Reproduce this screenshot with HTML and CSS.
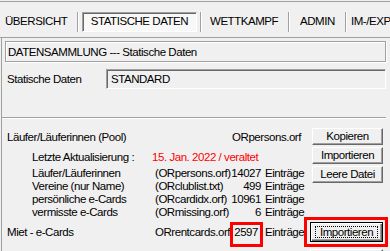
FILE: index.html
```html
<!DOCTYPE html>
<html>
<head>
<meta charset="utf-8">
<link rel="stylesheet" href="styles.css">
</head>
<body>
<div class="tabs">
  <div class="tab t1">ÜBERSICHT</div>
  <div class="sep"></div>
  <div class="tab t2 active">STATISCHE DATEN</div>
  <div class="sep"></div>
  <div class="tab t3">WETTKAMPF</div>
  <div class="sep"></div>
  <div class="tab t4">ADMIN</div>
  <div class="sep"></div>
  <div class="tab t5">IM-/EXPORT</div>
</div>
<div class="panel">
  <div class="titlebox">DATENSAMMLUNG --- Statische Daten</div>
  <div class="strow">
    <span class="stlabel">Statische Daten</span>
    <div class="input">STANDARD</div>
  </div>
  <div class="hr"></div>
  <div class="pool">
    <div class="info">
      <div class="r1"><span>Läufer/Läuferinnen (Pool)</span><span>ORpersons.orf</span></div>
      <div class="row r2"><span class="lbl">Letzte Aktualisierung :</span><span class="date">15. Jan. 2022 / veraltet</span></div>
      <div class="row r3"><span class="lbl">Läufer/Läuferinnen</span><span class="file">(ORpersons.orf)</span><span class="num">14027</span><span class="unit">Einträge</span></div>
      <div class="row"><span class="lbl">Vereine (nur Name)</span><span class="file">(ORclublist.txt)</span><span class="num">499</span><span class="unit">Einträge</span></div>
      <div class="row"><span class="lbl">persönliche e-Cards</span><span class="file">(ORcardidx.orf)</span><span class="num">10961</span><span class="unit">Einträge</span></div>
      <div class="row"><span class="lbl">vermisste e-Cards</span><span class="file">(ORmissing.orf)</span><span class="num">6</span><span class="unit">Einträge</span></div>
    </div>
    <div class="btns">
      <div class="btn">Kopieren</div>
      <div class="btn">Importieren</div>
      <div class="btn">Leere Datei</div>
    </div>
  </div>
  <div class="miet">
    <span class="mlabel">Miet - e-Cards</span>
    <span class="mfile">ORrentcards.orf</span>
    <span class="mnum">2597</span>
    <span class="munit">Einträge</span>
    <div class="mred"><div class="defbtn"><span class="focus">Importieren</span></div></div>
  </div>
  <div class="btn ghost"></div>
</div>
</body>
</html>
```
FILE: styles.css
```css
html, body {
  margin: 0;
  padding: 0;
  overflow: hidden;
}
body {
  background: #f0f0f0;
  font-family: "Liberation Sans", Arial, sans-serif;
  font-size: 11.5px;
  letter-spacing: -0.45px;
  color: #000;
  width: 390px;
  height: 251px;
  padding-top: 1px;
  box-sizing: border-box;
}
.tabs {
  display: flex;
  align-items: flex-start;
  height: 37px;
  box-sizing: border-box;
  border-top: 1px solid #a0a0a0;
  border-bottom: 1px solid #a0a0a0;
  padding-top: 10px;
  overflow: hidden;
}
.tab {
  height: 20px;
  line-height: 18px;
  white-space: nowrap;
  box-sizing: border-box;
  flex: none;
}
.sep {
  flex: none;
  width: 1px;
  height: 20px;
  background: #a0a0a0;
  border-right: 1px solid #fff;
}
.t1 { width: 77px; padding-left: 5px; }
.t2 {
  width: 115px;
  margin: 0 3px;
  text-align: center;
}
.active {
  border: 1px solid;
  border-color: #a0a0a0 #fff #fff #a0a0a0;
  box-shadow: inset 1px 1px #696969;
  background: #f8f8f8;
  line-height: 17px;
}
.t3 { width: 86px; padding-left: 8px; }
.t4 { width: 55px; padding-left: 10px; }
.t5 { padding-left: 4px; }

.panel {
  margin-left: 1px;
  border-left: 1px solid #a0a0a0;
  height: 213px;
  overflow: hidden;
}
.titlebox {
  margin: 3px 0 0 3px;
  width: 381px;
  height: 21px;
  box-sizing: border-box;
  border: 1px solid #a0a0a0;
  box-shadow: inset 1px 1px #fff, 1px 1px #fff;
  padding: 2px 0 0 2px;
  line-height: 17px;
  white-space: nowrap;
}
.strow {
  display: flex;
  margin-top: 7px;
  height: 20px;
}
.stlabel {
  width: 104px;
  padding-left: 5px;
  box-sizing: border-box;
  line-height: 20px;
}
.input {
  width: 280px;
  height: 20px;
  box-sizing: border-box;
  border: 1px solid;
  border-color: #a0a0a0 #fff #fff #a0a0a0;
  box-shadow: inset 1px 1px #696969;
  padding-left: 4px;
  line-height: 18px;
}
.hr {
  margin-top: 28px;
  width: 384px;
  height: 1px;
  background: #a0a0a0;
  border-bottom: 1px solid #fff;
}
.pool {
  display: flex;
}
.info {
  width: 310px;
  flex: none;
}
.r1 {
  display: flex;
  justify-content: space-between;
  width: 294px;
  margin-top: 11px;
  padding-left: 5px;
  line-height: 14px;
}
.row {
  display: flex;
  padding-left: 30px;
  line-height: 13px;
  white-space: nowrap;
}
.r2 { margin-top: 6px; line-height: 14px; }
.r3 { margin-top: 2px; line-height: 14px; }
.lbl { width: 123px; flex: none; }
.file { width: 75px; flex: none; }
.num { width: 31px; flex: none; text-align: right; }
.unit { margin-left: 4px; }
.date { margin-left: -3px; color: #f00; }

.btns {
  display: flex;
  flex-direction: column;
  gap: 2px;
  padding-top: 9px;
  width: 71px;
}
.btn {
  height: 17px;
  box-sizing: border-box;
  background: #f0f0f0;
  border: 1px solid;
  border-color: #fff #696969 #696969 #fff;
  box-shadow: inset -1px -1px #a0a0a0;
  text-align: center;
  line-height: 14px;
  white-space: nowrap;
}

.miet {
  display: flex;
  align-items: flex-start;
  margin-top: -2px;
  height: 30px;
  white-space: nowrap;
}
.mlabel {
  width: 153px;
  padding-left: 5px;
  box-sizing: border-box;
  margin-top: 8px;
  line-height: 14px;
  flex: none;
}
.mfile {
  width: 75px;
  margin-top: 8px;
  line-height: 14px;
  flex: none;
}
.mnum {
  width: 33px;
  height: 25px;
  margin-top: 5px;
  border: 3px solid #f00;
  box-sizing: border-box;
  text-align: right;
  padding-right: 2px;
  line-height: 14px;
  flex: none;
}
.munit {
  width: 36px;
  margin-left: 2px;
  margin-top: 8px;
  line-height: 14px;
  flex: none;
}
.mred {
  margin-left: 3px;
  width: 84px;
  height: 30px;
  border: 3px solid #f00;
  box-sizing: border-box;
  flex: none;
}
.defbtn {
  margin: 2px 0 0 3px;
  width: 73px;
  height: 20px;
  box-sizing: border-box;
  border: 1px solid #000;
  box-shadow: inset 1px 1px #fff, inset -1px -1px #696969, inset -2px -2px #a0a0a0;
  background: #f0f0f0;
  padding: 3px 4px;
}
.focus {
  display: block;
  height: 12px;
  box-sizing: border-box;
  border: 1px dotted #000;
  line-height: 10px;
  text-align: center;
}
.ghost {
  margin: 2px 0 0 308px;
  width: 73px;
}
```
